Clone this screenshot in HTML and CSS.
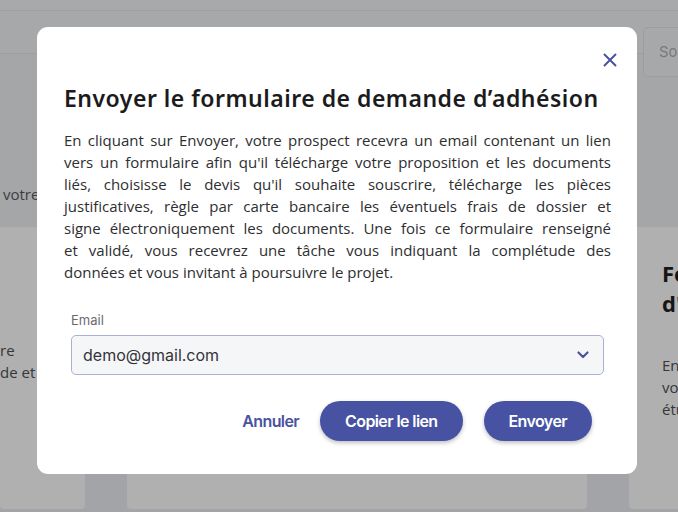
FILE: index.html
```html
<!DOCTYPE html>
<html lang="fr">
<head>
<meta charset="utf-8">
<title>Envoyer le formulaire</title>
<link rel="stylesheet" href="styles.css">
</head>
<body>
<div class="page">
  <div class="topbar"></div>
  <div class="subheader">
    <div class="tabs"></div>
    <div class="search">Sou</div>
  </div>
  <div class="intro">
    <p class="intro-text">votre</p>
  </div>
  <div class="cards">
    <div class="card card-left">
      <p class="card-text">re<br>de et</p>
    </div>
    <div class="card card-mid"></div>
    <div class="card card-right">
      <h3 class="card-title">Fo<br>d'</h3>
      <p class="card-text">En<br>vo<br>étu</p>
    </div>
  </div>
</div>

<div class="overlay">
  <div class="modal" role="dialog">
    <div class="modal-top">
      <button class="close" aria-label="Fermer">
        <svg width="14" height="14" viewBox="0 0 14 14"><path d="M1.5 1.5L12.5 12.5M12.5 1.5L1.5 12.5" stroke="#4a52a0" stroke-width="2" stroke-linecap="round"/></svg>
      </button>
    </div>
    <h2 class="title">Envoyer le formulaire de demande d’adhésion</h2>
    <p class="desc">
      <span class="line">En cliquant sur Envoyer, votre prospect recevra un email contenant un lien</span>
      <span class="line">vers un formulaire afin qu'il télécharge votre proposition et les documents</span>
      <span class="line">liés, choisisse le devis qu'il souhaite souscrire, télécharge les pièces</span>
      <span class="line">justificatives, règle par carte bancaire les éventuels frais de dossier et</span>
      <span class="line">signe électroniquement les documents. Une fois ce formulaire renseigné</span>
      <span class="line">et validé, vous recevrez une tâche vous indiquant la complétude des</span>
      <span class="line">données et vous invitant à poursuivre le projet.</span>
    </p>
    <div class="field">
      <label class="label">Email</label>
      <div class="select">
        <span class="select-value">demo@gmail.com</span>
        <svg class="chevron" width="12" height="8" viewBox="0 0 12 8"><path d="M1.5 1.5L6 6L10.5 1.5" fill="none" stroke="#4a52a0" stroke-width="2.2" stroke-linecap="round" stroke-linejoin="round"/></svg>
      </div>
    </div>
    <div class="actions">
      <button class="btn-text">Annuler</button>
      <button class="btn">Copier le lien</button>
      <button class="btn btn-send">Envoyer</button>
    </div>
  </div>
</div>
</body>
</html>
```
FILE: styles.css
```css
* { box-sizing: border-box; }
html, body { margin: 0; padding: 0; }
body {
  width: 678px;
  height: 512px;
  overflow: hidden;
  background: #a3a4a7;
  font-family: "Open Sans", "Liberation Sans", sans-serif;
}
.page { width: 678px; height: 512px; }
.topbar {
  height: 11px;
  background: #a8a9ab;
  border-bottom: 1px solid #9fa0a3;
}
.subheader {
  display: flex;
  height: 43px;
  background: #a7a8aa;
}
.tabs {
  flex: 1;
  height: 43px;
  border-bottom: 1px solid #9d9ea1;
}
.search {
  width: 40px;
  height: 50px;
  margin-top: 16px;
  margin-right: -5px;
  border: 1px solid #9c9da0;
  border-right: none;
  border-radius: 5px 0 0 5px;
  background: #a7a8aa;
  color: #77787c;
  font-family: "Inter", sans-serif;
  font-size: 15px;
  padding: 14px 0 0 15px;
  position: relative;
  z-index: 1;
}
.intro {
  height: 173px;
  background: #a5a6a8;
}
.intro-text {
  margin: 0;
  padding: 130px 0 0 3px;
  color: #3c3d3f;
  font-size: 15px;
  white-space: nowrap;
}
.cards {
  display: flex;
  gap: 42px;
  height: 282px;
}
.card {
  flex-shrink: 0;
  background: #b0b0b0;
  border-radius: 0 0 4px 4px;
  height: 282px;
}
.card-left { width: 85px; padding-top: 112px; }
.card-mid { width: 460px; }
.card-right { width: 60px; padding: 31px 0 0 33px; }
.card-text {
  margin: 0;
  font-size: 15px;
  line-height: 22px;
  color: #35363a;
}
.card-title {
  margin: 0 0 36px;
  font-size: 22px;
  line-height: 30px;
  font-weight: 700;
  color: #151515;
}

.overlay {
  position: fixed;
  inset: 0;
}
.modal {
  position: absolute;
  left: 37px;
  top: 27px;
  width: 600px;
  height: 447px;
  background: #fff;
  border-radius: 11px;
  padding: 0 26px 0 27px;
}
.modal-top {
  display: flex;
  justify-content: flex-end;
  height: 56px;
  padding-top: 26px;
  margin-right: -6px;
}
.close {
  border: 0;
  background: none;
  padding: 0;
  width: 14px;
  height: 14px;
  display: block;
  cursor: pointer;
}
.title {
  margin: 0;
  font-family: "Noto Sans", sans-serif;
  font-weight: 600;
  font-size: 23px;
  letter-spacing: 0.5px;
  line-height: 30px;
  color: #1b1b1d;
  white-space: nowrap;
}
.desc {
  margin: 16px 0 0;
  font-size: 15px;
  line-height: 22px;
  color: #2e2e30;
}
.line {
  display: block;
  text-align: justify;
  text-align-last: justify;
  white-space: nowrap;
}
.line:last-child { text-align-last: auto; }
.field {
  margin: 29px 7px 0 7px;
}
.label {
  display: block;
  font-family: "Inter", sans-serif;
  font-size: 13px;
  line-height: 16px;
  color: #6a6b70;
  margin-bottom: 7px;
}
.select {
  height: 40px;
  border: 1px solid #aab0d8;
  border-radius: 5px;
  background: #f5f6f8;
  display: flex;
  align-items: center;
  justify-content: space-between;
  padding: 0 14px 0 11px;
}
.select-value {
  font-family: "Inter", sans-serif;
  font-size: 16px;
  color: #333438;
}
.actions {
  display: flex;
  justify-content: flex-end;
  align-items: center;
  gap: 21px;
  margin-top: 26px;
  padding-right: 19px;
}
.btn-text, .btn {
  font-family: "Inter", sans-serif;
  font-weight: 600;
  font-size: 16px;
  letter-spacing: -0.6px;
  border: 0;
  cursor: pointer;
}
.btn-text {
  background: none;
  color: #4a52a0;
  padding: 0;
}
.btn {
  height: 40px;
  border-radius: 20px;
  background: #4753a2;
  color: #fff;
  padding: 0 25px;
  box-shadow: 0 2px 4px rgba(0, 0, 0, 0.25);
}
.btn-send { padding: 0 25px; }
```
